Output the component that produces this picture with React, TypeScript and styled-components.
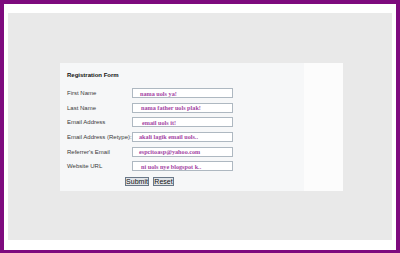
import * as React from 'react';
import styled, { createGlobalStyle } from 'styled-components';

const GlobalStyle = createGlobalStyle`
  html, body {
    margin: 0;
    padding: 0;
    background: #ffffff;
  }
`;

const Frame = styled.div`
  width: 400px;
  height: 253px;
  box-sizing: border-box;
  border: 4px solid #7e0a7e;
  border-bottom-width: 3px;
  background: #ffffff;
  padding: 9px 4px 10px 4px;
`;

const Canvas = styled.div`
  height: 100%;
  background: #e9e9e9;
  box-sizing: border-box;
  padding: 50px 49px 49px 52px;
  display: flex;
`;

const Panel = styled.div`
  flex: 1;
  display: flex;
`;

const FormArea = styled.div`
  width: 244px;
  background: #f6f7f8;
  box-sizing: border-box;
  padding: 7px 0 0 7px;
  display: flex;
  flex-direction: column;
`;

const Aside = styled.div`
  flex: 1;
  background: #fcfcfc;
`;

const Title = styled.div`
  font-family: 'Liberation Sans', Arial, sans-serif;
  font-weight: bold;
  font-size: 6px;
  line-height: 10px;
  height: 10px;
  color: #111;
  margin-bottom: 5.7px;
`;

const Row = styled.div`
  height: 14.67px;
  display: grid;
  grid-template-columns: 64px 102px;
  align-items: center;
`;

const Label = styled.label`
  font-family: 'Liberation Sans', Arial, sans-serif;
  font-size: 6px;
  color: #3a3a3a;
  white-space: nowrap;
`;

const Field = styled.div`
  position: relative;
  height: 10px;
  box-sizing: border-box;
  border: 1px solid #aeb8c1;
  background: #ffffff;
  margin-left: 1px;
  display: flex;
  align-items: center;
  padding-left: ${(p: { $indent: number }) => p.$indent}px;
  font-family: 'Liberation Serif', 'Times New Roman', serif;
  font-weight: bold;
  font-size: 6.2px;
  color: #a445a4;
  white-space: nowrap;
  overflow: hidden;

  &::before {
    content: '';
    position: absolute;
    left: -3px;
    top: 1px;
    height: 6px;
    border-left: 1px dashed #b8b8b8;
  }
`;

const Actions = styled.div`
  display: flex;
  gap: 4px;
  margin-top: 3.3px;
  padding-left: 58px;
`;

const Btn = styled.button`
  height: 9px;
  width: ${(p: { $w: number }) => p.$w}px;
  box-sizing: border-box;
  padding: 0;
  border: 1px solid #6a7888;
  background: #e1e5e9;
  font-family: 'Liberation Sans', Arial, sans-serif;
  font-size: 7px;
  line-height: 7px;
  color: #111;
`;

const fields = [
  { label: 'First Name', value: 'nama uols ya!', indent: 7 },
  { label: 'Last Name', value: 'nama father uols plak!', indent: 8 },
  { label: 'Email Address', value: 'email uols it!', indent: 9 },
  { label: 'Email Address (Retype):', value: 'akali lagik email uols..', indent: 6 },
  { label: "Referrer's Email", value: 'espcitoasp@yahoo.com', indent: 6 },
  { label: 'Website URL', value: 'ni uols nye blogspot k..', indent: 8 },
];

export default function App() {
  return (
    <>
      <GlobalStyle />
      <Frame>
        <Canvas>
          <Panel>
            <FormArea>
              <Title>Registration Form</Title>
              {fields.map((f) => (
                <Row key={f.label}>
                  <Label>{f.label}</Label>
                  <Field $indent={f.indent}>{f.value}</Field>
                </Row>
              ))}
              <Actions>
                <Btn $w={24}>Submit</Btn>
                <Btn $w={21}>Reset</Btn>
              </Actions>
            </FormArea>
            <Aside />
          </Panel>
        </Canvas>
      </Frame>
    </>
  );
}
